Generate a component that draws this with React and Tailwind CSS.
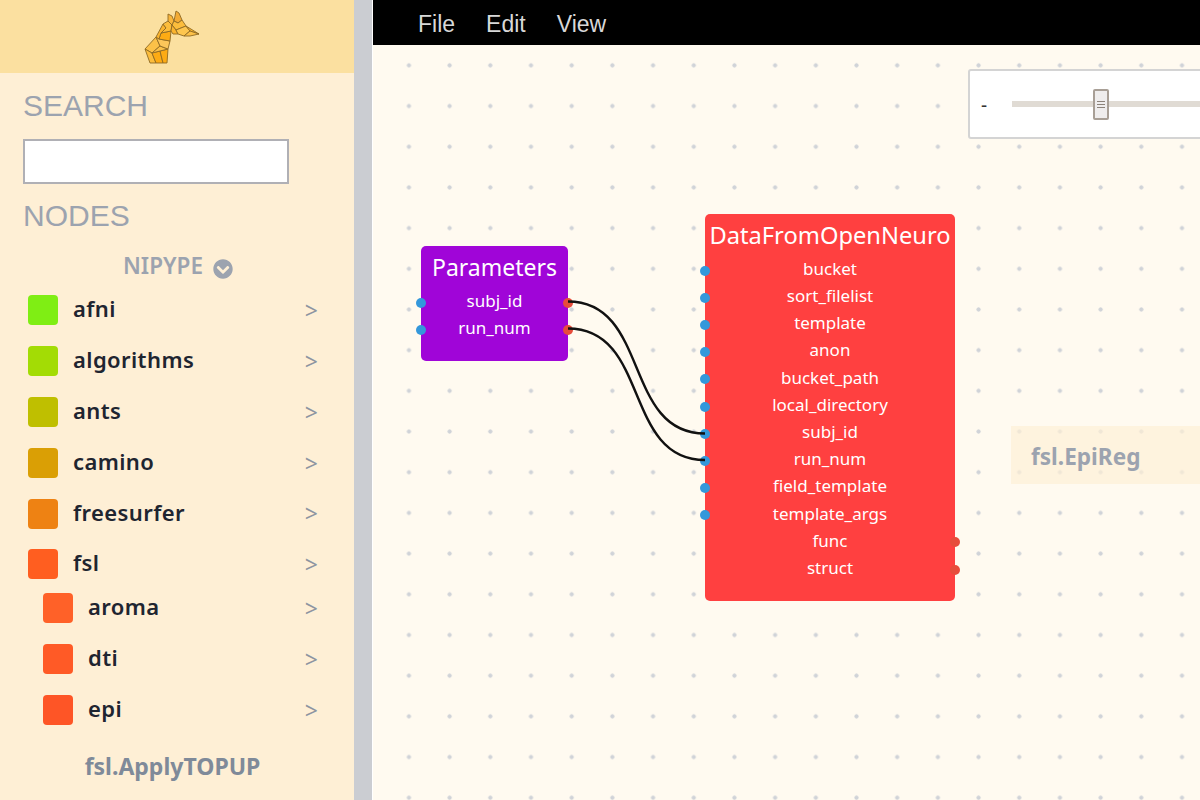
import React from 'react';
import { FaChevronCircleDown } from 'react-icons/fa';

const categories = [
  { name: 'afni', color: 'bg-[#7fee14]' },
  { name: 'algorithms', color: 'bg-[#a3dc05]' },
  { name: 'ants', color: 'bg-[#bfbf00]' },
  { name: 'camino', color: 'bg-[#da9f05]' },
  { name: 'freesurfer', color: 'bg-[#ee8213]' },
  { name: 'fsl', color: 'bg-[#ff5e20]' },
];
const subCategories = [
  { name: 'aroma', color: 'bg-[#ff6128]' },
  { name: 'dti', color: 'bg-[#ff5a26]' },
  { name: 'epi', color: 'bg-[#fe5526]' },
];
const dataInputs = [
  'bucket', 'sort_filelist', 'template', 'anon', 'bucket_path', 'local_directory',
  'subj_id', 'run_num', 'field_template', 'template_args',
];
const dataOutputs = ['func', 'struct'];

function Giraffe() {
  return (
    <svg width="65" height="62" viewBox="140 5 65 62" className="ml-[-10px] mt-[1px]">
      <g stroke="#8f6a24" strokeWidth="0.9" strokeLinejoin="round">
        <polygon points="145,48 156,36 160,45 152,52" fill="#fcc148" />
        <polygon points="145,48 152,52 156,62 150,62" fill="#fcbd3c" />
        <polygon points="152,52 160,50 163,62 156,62" fill="#fdab14" />
        <polygon points="160,50 168,48 167,62 163,62" fill="#fdab14" />
        <polygon points="160,45 168,48 160,50 152,52" fill="#fcc148" />
        <polygon points="156,36 159,38 170,40 168,48 160,45" fill="#fcc65a" />
        <polygon points="159,38 161,32 171,30 170,40" fill="#fdab14" />
        <polygon points="156,36 163,23 166,27 161,32 159,38" fill="#fbb42e" />
        <polygon points="163,23 168,20 172,24 171,30 161,32 166,27" fill="#fcbd3c" />
        <polygon points="168,20 168,13 172,15 174,20 172,24" fill="#f9b63c" />
        <polygon points="174,20 176,10 179,12 182,19 178,22" fill="#f3ab35" />
        <polygon points="172,24 174,20 178,22 182,19 186,25 176,29" fill="#fcbd3c" />
        <polygon points="171,30 172,24 176,29 178,33 173,33" fill="#fbb42e" />
        <polygon points="176,29 186,25 190,30 184,35 178,33" fill="#fdc64f" />
        <polygon points="186,25 199,33 190,30" fill="#fbb42e" />
        <polygon points="190,30 199,33 190,35 184,35" fill="#fcc148" />
      </g>
    </svg>
  );
}

function CategoryRow({ name, color, indent }) {
  return (
    <div className={`flex items-center pr-[36px] ${indent ? 'h-[51px] pl-[43px]' : 'h-[50.8px] pl-[28px]'}`}>
      <div className={`h-[30px] w-[30px] rounded-[4px] ${color}`} />
      <span className="ml-[15px] flex-1 pb-[3px] text-[22px] font-semibold tracking-[0.4px] text-[#1f2530]">{name}</span>
      <span className="text-[23px] text-[#8d94a1]">&gt;</span>
    </div>
  );
}

function Port({ side, color }) {
  return (
    <span
      className={`absolute top-1/2 h-[10px] w-[10px] -translate-y-1/2 rounded-full ${color} ${
        side === 'left' ? 'left-[-5px]' : 'right-[-5px]'
      }`}
    />
  );
}

function PortRow({ label, input, output }) {
  return (
    <div className="relative flex h-[27.2px] items-center justify-center text-[17px] text-white">
      {input && <Port side="left" color="bg-[#3498db]" />}
      <span className="pb-[4px]">{label}</span>
      {output && <Port side="right" color="bg-[#e74c3c]" />}
    </div>
  );
}

function Sidebar() {
  return (
    <aside className="flex h-full w-[354px] shrink-0 flex-col overflow-hidden bg-[#feefd5]">
      <div className="flex h-[73px] shrink-0 items-center justify-center bg-[#fbe0a0]">
        <Giraffe />
      </div>
      <div className="px-[23px] pt-[14px] font-['Liberation_Sans',sans-serif] text-[30px] leading-[38px] text-[#9ca3af]">
        SEARCH
      </div>
      <input className="mx-[23px] mt-[14px] h-[45px] w-[266px] shrink-0 border-2 border-[#b0b0b5] bg-white" />
      <div className="px-[23px] pt-[13px] font-['Liberation_Sans',sans-serif] text-[30px] leading-[38px] text-[#9ca3af]">
        NODES
      </div>
      <div className="mt-[16px] flex h-[30px] items-center justify-center gap-[10px] pl-[2px] text-[22.5px] font-semibold text-[#9ca3af]">
        <span>NIPYPE</span>
        <FaChevronCircleDown className="mt-[5px] text-[20px]" />
      </div>
      <div className="mt-[4px]">
        {categories.map((c) => (
          <CategoryRow key={c.name} {...c} />
        ))}
      </div>
      <div className="mt-[-7px]">
        {subCategories.map((c) => (
          <CategoryRow key={c.name} {...c} indent />
        ))}
      </div>
      <div className="mt-[13px] pr-[9px] text-center text-[23px] font-bold text-[#7f8a99]">fsl.ApplyTOPUP</div>
    </aside>
  );
}

function Canvas() {
  return (
    <div className="relative flex-1 overflow-hidden bg-[#fffaf0] bg-[radial-gradient(circle,#d0d3d8_1.8px,transparent_2.4px)] bg-[size:40.7px_40.7px] bg-[position:15.6px_0px]">
      <div className="absolute left-[595px] top-[24px] flex h-[70px] w-[300px] items-center rounded-[3px] border-2 border-[#d4d4d4] bg-white pl-[11px]">
        <span className="pt-[2px] text-[19px] text-[#333]">-</span>
        <div className="relative ml-[25px] h-[6px] flex-1 bg-[#e0dbd4]">
          <div className="absolute left-[81px] top-[-12px] flex h-[31px] w-[16px] flex-col items-center justify-center gap-[2px] rounded-[2px] border-2 border-[#a89f96] bg-[#efeded]">
            <span className="h-[1px] w-[8px] bg-[#8c837a]" />
            <span className="h-[1px] w-[8px] bg-[#8c837a]" />
            <span className="h-[1px] w-[8px] bg-[#8c837a]" />
          </div>
        </div>
      </div>

      <svg className="absolute left-0 top-0 z-10" width="827" height="755" fill="none" stroke="#111" strokeWidth="2.4">
        <path d="M195 256.5 C277 256.5 250 388.5 332 388.5" />
        <path d="M195 283.5 C277 283.5 250 415 332 415" />
      </svg>

      <div className="absolute left-[48px] top-[201px] h-[115px] w-[147px] rounded-[5px] bg-[#a005d8]">
        <div className="flex h-[43px] items-center justify-center text-[23px] text-white">Parameters</div>
        <PortRow label="subj_id" input output />
        <PortRow label="run_num" input output />
      </div>

      <div className="absolute left-[332px] top-[169px] h-[387px] w-[250px] rounded-[5px] bg-[#ff4040]">
        <div className="flex h-[44px] items-center justify-center text-[23.7px] text-white">DataFromOpenNeuro</div>
        <div className="mt-[-1px]">
          {dataInputs.map((p) => (
            <PortRow key={p} label={p} input />
          ))}
          {dataOutputs.map((p) => (
            <PortRow key={p} label={p} output />
          ))}
        </div>
      </div>

      <div className="absolute left-[638px] top-[381px] flex h-[58px] w-[240px] items-center bg-[#feefd5]/70 pl-[20px] pt-[4px] text-[22.6px] font-bold text-[#9ca3af]">
        fsl.EpiReg
      </div>
    </div>
  );
}

export default function App() {
  return (
    <div className="flex h-[800px] w-[1200px] overflow-hidden bg-white font-['Noto_Sans',sans-serif]">
      <Sidebar />
      <div className="w-[18px] shrink-0 bg-[#cbcdd2]" />
      <main className="ml-[1px] flex min-w-0 flex-1 flex-col">
        <nav className="flex h-[45px] shrink-0 items-center gap-[31px] bg-black pl-[45px] pt-[3px] font-['Liberation_Sans',sans-serif] text-[23px] text-[#d8d8d8]">
          <span>File</span>
          <span>Edit</span>
          <span>View</span>
        </nav>
        <Canvas />
      </main>
    </div>
  );
}
